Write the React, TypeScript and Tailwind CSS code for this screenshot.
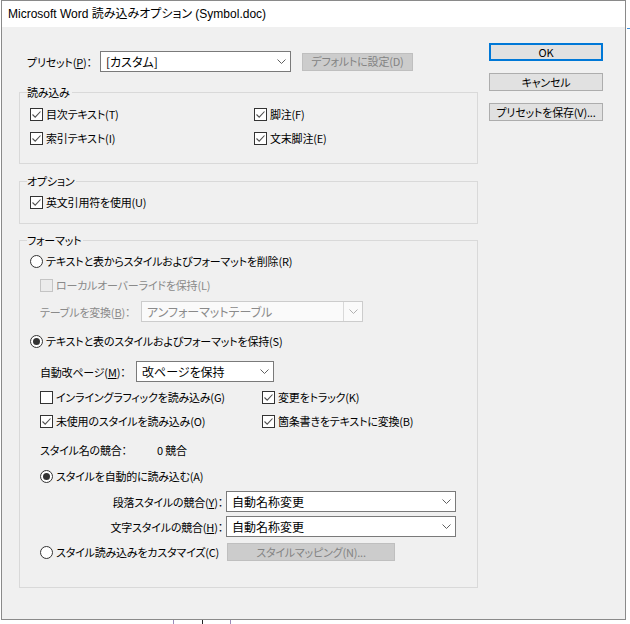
import React from "react";

function Check({ checked = false, disabled = false }: { checked?: boolean; disabled?: boolean }) {
  if (disabled) {
    return <span className="block w-[13px] h-[13px] border border-[#c4c4c4] bg-[#ebebeb] shrink-0" />;
  }
  return (
    <span className="flex items-center justify-center w-[13px] h-[13px] border border-[#333333] bg-white shrink-0">
      {checked && (
        <svg width="11" height="11" viewBox="0 0 11 11">
          <path d="M1.5 5.5 L4.2 8.2 L9.5 2.5" fill="none" stroke="#505050" strokeWidth="1.1" />
        </svg>
      )}
    </span>
  );
}

function Radio({ checked = false }: { checked?: boolean }) {
  return (
    <span className="flex items-center justify-center w-[13px] h-[13px] rounded-full border border-[#333333] bg-white shrink-0">
      {checked && <span className="block w-[7px] h-[7px] rounded-full bg-[#333333]" />}
    </span>
  );
}

function Chevron({ color = "#606060" }: { color?: string }) {
  return (
    <svg width="9" height="5" viewBox="0 0 9 5">
      <path d="M0.5 0.5 L4.5 4.5 L8.5 0.5" fill="none" stroke={color} strokeWidth="1" />
    </svg>
  );
}

function Select({ width, text }: { width: string; text: string }) {
  return (
    <div className={"flex items-center h-[21px] border border-[#7a7a7a] bg-white pl-[5px] pr-[4px] " + width}>
      <span className="flex-1 text-[12px] tracking-normal">{text}</span>
      <Chevron />
    </div>
  );
}

function CheckRow({ label, checked = false, className = "" }: { label: string; checked?: boolean; className?: string }) {
  return (
    <div className={"flex items-center h-[16px] gap-[3px] whitespace-nowrap " + className}>
      <Check checked={checked} />
      <span>{label}</span>
    </div>
  );
}

function RadioRow({ label, checked = false }: { label: string; checked?: boolean }) {
  return (
    <div className="flex items-center h-[16px] gap-[3px] whitespace-nowrap">
      <Radio checked={checked} />
      <span>{label}</span>
    </div>
  );
}

export default function App() {
  return (
    <div className="relative w-[630px] h-[624px] bg-white overflow-hidden font-['Noto_Sans_CJK_JP',sans-serif] text-[11px] tracking-[-0.2px] leading-[16px] text-black [font-feature-settings:'palt']">
      <div className="ml-[1px] w-[625px] h-[620px] border border-[#8a8a8a] flex flex-col">
        <div className="h-[26px] shrink-0 bg-white flex items-center pl-[6px] text-[12px] tracking-normal font-['Liberation_Sans','Noto_Sans_CJK_JP',sans-serif]">
          Microsoft Word 読み込みオプション (Symbol.doc)
        </div>
        <div className="flex-1 bg-[#f0f0f0] flex">
          {/* left column */}
          <div className="w-[476px] pl-[17px] pt-[24px]">
            <div className="flex items-center h-[21px] pl-[8px]">
              <span className="w-[73px]">
                プリセット(<span className="underline">P</span>)：
              </span>
              <Select width="w-[191px]" text="[カスタム]" />
              <button
                disabled
                className="ml-[11px] w-[111px] h-[18px] flex items-center justify-center bg-[#cccccc] border border-[#bfbfbf] text-[#838383] leading-none"
              >
                デフォルトに設定(D)
              </button>
            </div>

            <fieldset className="mt-[12px] w-[459px] border border-[#d9d9d9] pl-[10px] pt-[6px] pb-[17px]">
              <legend className="ml-[-3px] pr-[2px] leading-[16px]">読み込み</legend>
              <div className="flex">
                <div className="w-[224px] flex flex-col gap-[8px]">
                  <CheckRow label="目次テキスト(T)" checked />
                  <CheckRow label="索引テキスト(I)" checked />
                </div>
                <div className="flex flex-col gap-[8px]">
                  <CheckRow label="脚注(F)" checked />
                  <CheckRow label="文末脚注(E)" checked />
                </div>
              </div>
            </fieldset>

            <fieldset className="mt-[9px] w-[459px] border border-[#d9d9d9] pl-[10px] pt-[5px] pb-[13px]">
              <legend className="ml-[-3px] pr-[2px] leading-[16px]">オプション</legend>
              <CheckRow label="英文引用符を使用(U)" checked />
            </fieldset>

            <fieldset className="mt-[8px] w-[459px] border border-[#d9d9d9] pl-[10px] pt-[5px] pb-[26px]">
              <legend className="ml-[-3px] pr-[2px] leading-[16px]">フォーマット</legend>
              <RadioRow label="テキストと表からスタイルおよびフォーマットを削除(R)" />
              <div className="mt-[8px] ml-[10px] flex items-center h-[16px] gap-[3px] text-[#8a8a8a]">
                <Check disabled />
                <span>ローカルオーバーライドを保持(L)</span>
              </div>
              <div className="mt-[8px] ml-[10px] flex items-center h-[21px] text-[#8a8a8a]">
                <span className="w-[101px]">
                  テーブルを変換(<span className="underline">B</span>)：
                </span>
                <div className="flex items-center h-[21px] w-[222px] border border-[#cccccc] bg-[#fafafa]">
                  <span className="flex-1 pl-[5px] text-[12px] tracking-normal">アンフォーマットテーブル</span>
                  <span className="h-full w-[19px] border-l border-[#d9d9d9] flex items-center justify-center">
                    <Chevron color="#b0b0b0" />
                  </span>
                </div>
              </div>
              <div className="mt-[11px]">
                <RadioRow label="テキストと表のスタイルおよびフォーマットを保持(S)" checked />
              </div>
              <div className="mt-[12px] ml-[10px] flex items-center h-[21px]">
                <span className="w-[96px]">
                  自動改ページ(<span className="underline">M</span>)：
                </span>
                <Select width="w-[138px]" text="改ページを保持" />
              </div>
              <div className="mt-[7px] ml-[10px] flex">
                <CheckRow className="w-[222px]" label="インライングラフィックを読み込み(G)" />
                <CheckRow label="変更をトラック(K)" checked />
              </div>
              <div className="mt-[8px] ml-[10px] flex">
                <CheckRow className="w-[222px]" label="未使用のスタイルを読み込み(O)" checked />
                <CheckRow label="箇条書きをテキストに変換(B)" checked />
              </div>
              <div className="mt-[13px] ml-[10px] flex items-center h-[16px]">
                <span className="w-[117px]">スタイル名の競合：</span>
                <span>0 競合</span>
              </div>
              <div className="mt-[10px] ml-[10px]">
                <RadioRow label="スタイルを自動的に読み込む(A)" checked />
              </div>
              <div className="mt-[7px] ml-[10px] flex items-center h-[21px]">
                <span className="w-[186px] text-right pr-[3px]">
                  段落スタイルの競合(<span className="underline">Y</span>)：
                </span>
                <Select width="w-[230px]" text="自動名称変更" />
              </div>
              <div className="mt-[4px] ml-[10px] flex items-center h-[21px]">
                <span className="w-[186px] text-right pr-[3px]">
                  文字スタイルの競合(<span className="underline">H</span>)：
                </span>
                <Select width="w-[230px]" text="自動名称変更" />
              </div>
              <div className="mt-[6px] ml-[10px] flex items-center h-[18px]">
                <div className="w-[187px]">
                  <RadioRow label="スタイル読み込みをカスタマイズ(C)" />
                </div>
                <button
                  disabled
                  className="w-[168px] h-[18px] flex items-center justify-center bg-[#cccccc] border border-[#bfbfbf] text-[#838383] leading-none"
                >
                  スタイルマッピング(N)...
                </button>
              </div>
            </fieldset>
          </div>

          {/* right column */}
          <div className="pt-[16px] pl-[11px] flex flex-col gap-[12px]">
            <button className="w-[114px] h-[18px] flex items-center justify-center bg-[#e1e1e1] border-2 border-[#0078d7] leading-none">
              OK
            </button>
            <button className="w-[114px] h-[18px] flex items-center justify-center bg-[#e1e1e1] border border-[#adadad] leading-none">
              キャンセル
            </button>
            <button className="w-[114px] h-[18px] flex items-center justify-center bg-[#e1e1e1] border border-[#adadad] leading-none">
              プリセットを保存(V)...
            </button>
          </div>
        </div>
      </div>
      {/* desktop edges behind the dialog */}
      <div className="absolute left-[627px] top-[28px] w-[3px] h-[1px] bg-[#3c8fdc]" />
      <div className="absolute left-[173px] top-[620px] w-[1px] h-[4px] bg-[#9a8ab8]" />
      <div className="absolute left-[202px] top-[620px] w-[1px] h-[4px] bg-[#222222]" />
      <div className="absolute left-[230px] top-[620px] w-[1px] h-[4px] bg-[#9a8ab8]" />
    </div>
  );
}
